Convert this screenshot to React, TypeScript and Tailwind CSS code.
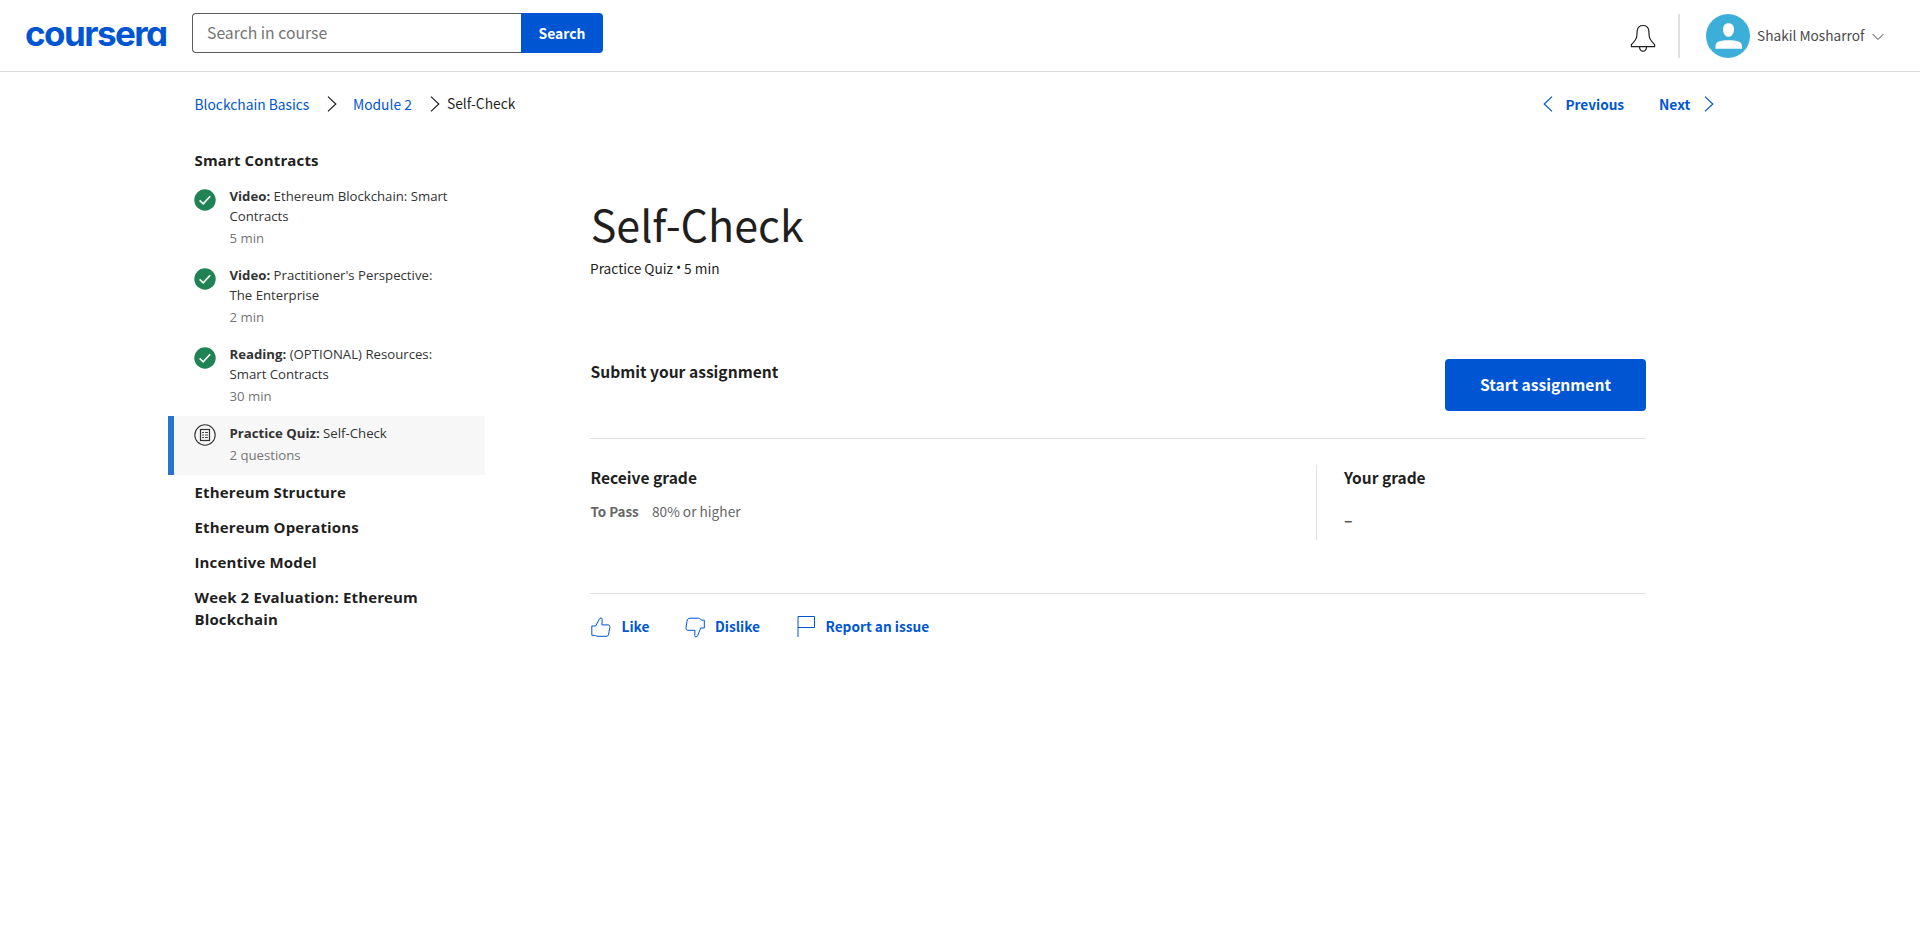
import React from "react";

type Item = { kind: string; title: string; meta: string; done: boolean };

const items: Item[] = [
  { kind: "Video:", title: "Ethereum Blockchain: Smart Contracts", meta: "5 min", done: true },
  { kind: "Video:", title: "Practitioner's Perspective: The Enterprise", meta: "2 min", done: true },
  { kind: "Reading:", title: "(OPTIONAL) Resources: Smart Contracts", meta: "30 min", done: true },
  { kind: "Practice Quiz:", title: "Self-Check", meta: "2 questions", done: false },
];

const sections = [
  "Ethereum Structure",
  "Ethereum Operations",
  "Incentive Model",
  "Week 2 Evaluation: Ethereum Blockchain",
];

function Chevron({ className, left = false }: { className: string; left?: boolean }) {
  return (
    <svg className={className} width="10" height="16" viewBox="0 0 10 16" fill="none" stroke="currentColor" strokeWidth="1.2">
      <path d={left ? "M9 0.6 1.2 8 9 15.4" : "M1 0.6 8.8 8 1 15.4"} />
    </svg>
  );
}

function Header() {
  return (
    <header className="flex h-[72px] items-start border-b border-[#dadada] pl-[25px]">
      <a
        href="#"
        className="mt-[13px] w-[167px] whitespace-nowrap font-['Inter',sans-serif] text-[35px] font-bold leading-[40px] tracking-[-1.55px] text-[#0056d2] [font-feature-settings:'cv11']"
      >
        coursera
      </a>
      <form className="mt-[13px] flex h-10 w-[411px]">
        <div className="flex w-[329px] items-center rounded-l-[4px] border border-r-0 border-[#5c5c5c] pl-[14px] text-[15.75px] leading-[38px] text-[#757575]">
          <span className="-mt-px">Search in course</span>
        </div>
        <button type="button" className="w-[82px] rounded-r-[4px] bg-[#0056d2] pb-px text-[13.9px] font-bold leading-[38px] text-white">
          Search
        </button>
      </form>
      <div className="ml-auto flex h-[72px] items-start pr-[35px]">
        <svg className="mt-[24px]" width="26" height="28" viewBox="0 0 26 28" fill="none" stroke="#1f1f1f" strokeWidth="1.2">
          <path d="M1.4 22.6V20.6C4.6 17.4 6.6 15.2 6.8 12L7.2 6.8C7.6 3.2 10 1.5 13 1.5S18.4 3.2 18.8 6.8L19.2 12C19.4 15.2 21.4 17.4 24.6 20.6V22.6Z" />
          <path d="M9.5 23C9.7 25.8 11 27.2 13 27.2S16.3 25.8 16.5 23" />
        </svg>
        <div className="ml-[22px] mt-[14px] h-11 w-[2px] bg-[#e1e1e1]" />
        <svg className="ml-[26px] mt-[14px]" width="44" height="44" viewBox="0 0 44 44">
          <circle cx="22" cy="22" r="22" fill="#3baeda" />
          <path d="M22.4 9.2C26 9.2 28 11.6 28 15.2C28 19.4 25.6 22.8 22.4 22.8S17 19.4 17 15.2C17 11.6 18.9 9.2 22.4 9.2Z" fill="#fff" />
          <path d="M9.5 34.8V32C9.5 27.8 14 26.3 22.5 26.3S36 27.8 36 32V34.800Z" fill="#fff" />
        </svg>
        <span className="ml-[7px] mt-[25px] w-[115px] whitespace-nowrap text-[13.7px] leading-5 text-[#4a4a4a]">Shakil Mosharrof</span>
        <svg className="mr-px mt-[33px]" width="12" height="8" viewBox="0 0 12 8" fill="none" stroke="#4a4a4a" strokeWidth="1">
          <path d="M0.5 1 6 6.5 11.5 1" />
        </svg>
      </div>
    </header>
  );
}

function Breadcrumbs() {
  return (
    <nav className="flex h-[71px] items-start pl-[194.5px] pr-[206px] pt-[21px] text-[13.8px] leading-5">
      <a href="#" className="mt-px w-[132.5px] text-[#0056d2]">Blockchain Basics</a>
      <Chevron className="mt-[3px] text-[#1f1f1f]" />
      <a href="#" className="ml-4 mt-px w-[77px] text-[#0056d2]">Module 2</a>
      <Chevron className="mt-[3px] text-[#1f1f1f]" />
      <span className="ml-[7px] text-[#1f1f1f]">Self-Check</span>
      <div className="ml-auto flex font-bold text-[#0056d2]">
        <Chevron left className="mt-[3px]" />
        <a href="#" className="ml-[13px] mt-px w-[93.5px] text-[13.6px]">Previous</a>
        <a href="#" className="mt-px w-[45px]">Next</a>
        <Chevron className="mt-[3px]" />
      </div>
    </nav>
  );
}

function StatusIcon({ done }: { done: boolean }) {
  return done ? (
    <svg className="mt-[3px] shrink-0" width="22" height="22" viewBox="0 0 22 22" fill="none">
      <circle cx="11" cy="11" r="10.7" fill="#1f8354" />
      <path d="M5.600 11.400 9.200 14.800 16.200 7.200" stroke="#fff" strokeWidth="1.6" />
    </svg>
  ) : (
    <svg className="mt-[1px] shrink-0" width="22" height="22" viewBox="0 0 22 22" fill="none" stroke="#333">
      <circle cx="11" cy="11" r="10.2" strokeWidth="1.1" />
      <rect x="6.5" y="5.5" width="9" height="11" strokeWidth="1.2" />
      <path d="M8 8.500h2M8 11h2M8 13.500h2M11 8.500h3M11 11h3M11 13.500h3" strokeWidth="0.9" />
    </svg>
  );
}

function Sidebar() {
  return (
    <aside className="w-[317px] shrink-0 font-['Open_Sans',sans-serif]">
      <h2 className="mb-px pb-[7px] pl-[26.5px] pt-[6px] text-[15px] font-bold leading-[22px] tracking-[0.14px] text-[#1f1f1f]">
        Smart Contracts
      </h2>
      <ul>
        {items.map((item) => (
          <li
            key={item.title}
            className={
              "flex border-l-[6px] pb-[10px] pl-5 pt-[7px] text-[13.2px] leading-5 " +
              (item.done ? "border-transparent" : "border-[#2a73cc] bg-[#f7f7f7]")
            }
          >
            <StatusIcon done={item.done} />
            <div className="ml-[13.5px] w-[222px]">
              <p className="text-[#333]">
                <span className="font-bold">{item.kind}</span> {item.title}
              </p>
              <p className="mt-[2px] text-[#757575]">{item.meta}</p>
            </div>
          </li>
        ))}
      </ul>
      {sections.map((name) => (
        <h2 key={name} className="pb-[7px] pl-[26.5px] pr-[50px] pt-[6px] text-[15px] font-bold leading-[22px] tracking-[0.14px] text-[#1f1f1f]">
          {name}
        </h2>
      ))}
    </aside>
  );
}

function Assignment() {
  return (
    <main className="ml-[105px] w-[1056px] pt-[52px] text-[#1f1f1f]">
      <h1 className="pl-[0.7px] text-[43px] leading-[56px]">Self-Check</h1>
      <p className="mt-[7px] flex text-[13.7px] leading-5">
        <span>Practice Quiz</span>
        <span className="w-[11px] text-center font-['Open_Sans',sans-serif]">•</span>
        <span>5 min</span>
      </p>

      <section className="mt-[81px] flex items-start justify-between border-b border-[#e1e1e1] pb-[27px]">
        <h2 className="pl-[0.5px] text-[15.6px] font-bold leading-6">Submit your assignment</h2>
        <button type="button" className="h-[52px] w-[201px] rounded-[4px] bg-[#0056d2] pb-px text-[15.6px] font-bold text-white">
          Start assignment
        </button>
      </section>

      <section className="flex border-b border-[#e1e1e1] pb-[53px] pt-[26px]">
        <div className="w-[726px] pl-[0.5px]">
          <h2 className="text-[15.6px] font-bold leading-6">Receive grade</h2>
          <p className="mt-3 flex text-[13.7px] leading-5 text-[#666]">
            <span className="w-[61.5px] text-[13.4px] font-bold">To Pass</span>
            <span>80% or higher</span>
          </p>
        </div>
        <div className="h-[75px] border-l border-[#e1e1e1] pl-[27px]">
          <h2 className="text-[15.5px] font-bold leading-6">Your grade</h2>
          <p className="mt-5 text-[15.6px] font-bold leading-5 text-[#555]">–</p>
        </div>
      </section>

      <div className="flex pt-[20px] text-[13.7px] font-bold leading-6 text-[#0056d2]">
        <button type="button" className="flex w-[94px]">
          <svg className="ml-px mt-[2.5px]" width="20" height="20" viewBox="0 0 20 20" fill="none" stroke="currentColor" strokeWidth="1">
            <path d="M0.8 18.300V9H4.700L8.300 2.200C8.900 0.500 11.300 0.600 11.200 2.400L10.900 7.900H17C18.600 7.900 19 9 18.800 10.300L17.700 17C17.400 18.700 16.600 19.300 15 19.300H7C5.300 19.300 4.500 18.300 3.500 18.300Z" />
          </svg>
          <span className="ml-[10.5px]">Like</span>
        </button>
        <button type="button" className="flex w-[112px]">
          <svg className="ml-px mt-[2.5px]" width="20" height="21" viewBox="0 0 20 21" fill="none" stroke="currentColor" strokeWidth="1">
            <path d="M19.300 3.200V11H15.800L12.600 18.700C12 20.500 9.600 20.300 9.700 18.500L10 13.300H3C1.400 13.300 0.800 12.300 1 11L2 4.200C2.300 2.200 3.300 1.200 5 1.200H13.500C15.200 1.200 15.800 3.200 17 3.200Z" />
          </svg>
          <span className="ml-[10px]">Dislike</span>
        </button>
        <button type="button" className="flex">
          <svg className="ml-px mt-px" width="19" height="22" viewBox="0 0 19 22" fill="none" stroke="currentColor" strokeWidth="1">
            <path d="M1 22V1.500H17.500V12.500H1" />
          </svg>
          <span className="ml-[9.5px]">Report an issue</span>
        </button>
      </div>
    </main>
  );
}

export default function App() {
  return (
    <div className="min-h-[937px] w-[1920px] bg-white font-['Noto_Sans_CJK_SC',sans-serif]">
      <Header />
      <Breadcrumbs />
      <div className="flex pl-[168px]">
        <Sidebar />
        <Assignment />
      </div>
    </div>
  );
}
